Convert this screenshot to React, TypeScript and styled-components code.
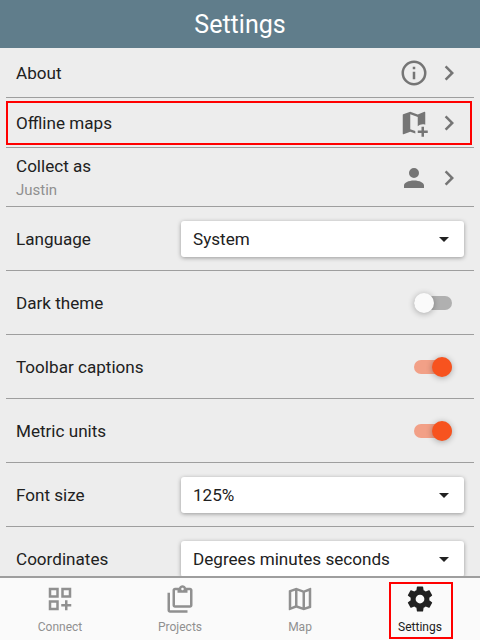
import React from "react";
import styled, { createGlobalStyle } from "styled-components";

const GlobalStyle = createGlobalStyle`
  * { box-sizing: border-box; }
  body { margin: 0; }
`;

const Screen = styled.div`
  width: 480px;
  height: 640px;
  display: flex;
  flex-direction: column;
  overflow: hidden;
  background: #ededed;
  color: #212121;
  font-family: Roboto, sans-serif;
  font-size: 17.1px;
`;

const Header = styled.header`
  flex: none;
  height: 48px;
  padding-top: 2px;
  display: flex;
  align-items: center;
  justify-content: center;
  background: #607d8b;
  color: #fff;
  font-size: 25px;
  line-height: 30px;
`;

const SettingsList = styled.main`
  flex: 1;
  min-height: 0;
  overflow: hidden;
  padding: 0 6px;
`;

const Row = styled.div<{ $height?: number }>`
  position: relative;
  height: ${(p) => p.$height ?? 64}px;
  padding: 0 10px;
  display: flex;
  align-items: center;
  justify-content: space-between;
  border-bottom: 1px solid #9e9e9e;
`;

const Labels = styled.div`
  display: flex;
  flex-direction: column;
`;

const Label = styled.span`
  line-height: 24px;
  white-space: nowrap;
`;

const Caption = styled.span`
  font-size: 15px;
  line-height: 24px;
  margin-bottom: -2px;
  color: #909090;
`;

const RowIcons = styled.div<{ $lowered?: boolean }>`
  display: flex;
  gap: 5px;
  padding-top: ${(p) => (p.$lowered ? 2 : 0)}px;
  color: #757575;
`;

const Highlight = styled.div<{ $inset: string }>`
  position: absolute;
  inset: ${(p) => p.$inset};
  border: 2px solid #ff0000;
`;

const Select = styled.div`
  width: 283px;
  height: 36px;
  flex: none;
  padding: 0 8px 0 12px;
  display: flex;
  align-items: center;
  justify-content: space-between;
  background: #fff;
  border-radius: 3px;
  box-shadow: 0 1px 4px rgba(0, 0, 0, 0.36);
`;

const Track = styled.div<{ $on: boolean }>`
  width: 38px;
  height: 14px;
  margin-right: 12px;
  border-radius: 7px;
  display: flex;
  align-items: center;
  justify-content: ${(p) => (p.$on ? "flex-end" : "flex-start")};
  background: ${(p) => (p.$on ? "#f2a087" : "#b0b0b0")};
`;

const Thumb = styled.div<{ $on: boolean }>`
  width: 20px;
  height: 20px;
  flex: none;
  border-radius: 50%;
  background: ${(p) => (p.$on ? "#f7531f" : "#fafafa")};
  box-shadow: 0 1px 6px rgba(0, 0, 0, 0.3);
`;

const TabBar = styled.nav`
  flex: none;
  height: 64px;
  display: grid;
  grid-template-columns: repeat(4, 1fr);
  background: #fafafa;
  border-top: 2px solid #9e9e9e;
`;

const Tab = styled.div<{ $active?: boolean }>`
  position: relative;
  display: flex;
  flex-direction: column;
  align-items: center;
  padding-top: 6px;
  color: ${(p) => (p.$active ? "#212121" : "#909090")};
  font-size: 12px;
  line-height: 16px;
`;

const TabCaption = styled.span`
  margin-top: 5px;
`;

const paths = {
  info: "M11,9H13V7H11M12,20C7.59,20 4,16.41 4,12C4,7.59 7.59,4 12,4C16.41,4 20,7.59 20,12C20,16.41 16.41,20 12,20M12,2A10,10 0 0,0 2,12A10,10 0 0,0 12,22A10,10 0 0,0 22,12A10,10 0 0,0 12,2M11,17H13V11H11V17Z",
  chevron: "M8.59,16.58L13.17,12L8.59,7.41L10,6L16,12L10,18L8.59,16.58Z",
  mapPlus:
    "M9,3L3.36,4.9C3.15,4.97 3,5.15 3,5.38V20.5A0.5,0.5 0 0,0 3.5,21L3.66,20.97L9,18.9L13.16,20.36C13.06,19.92 13,19.46 13,19C13,18.77 13,18.54 13.04,18.3L9,16.9V5L15,7.1V14.56C16.07,13.6 17.47,13 19,13C19.7,13 20.37,13.13 21,13.36V3.5A0.5,0.5 0 0,0 20.5,3L20.34,3.03L15,5.1L9,3M18,15V18H15V20H18V23H20V20H23V18H20V15H18Z",
  person: "M12,4A4,4 0 0,1 16,8A4,4 0 0,1 12,12A4,4 0 0,1 8,8A4,4 0 0,1 12,4M12,14C16.42,14 20,15.79 20,18V20H4V18C4,15.79 7.58,14 12,14Z",
  caret: "M7,10L12,15L17,10H7Z",
  connect: "M3,3H11V11H3V3M5,5V9H9V5H5M13,3H21V11H13V3M15,5V9H19V5H15M3,13H11V21H3V13M5,15V19H9V15H5M16,13H18V16H21V18H18V21H16V18H13V16H16V13Z",
  projects:
    "M4,7V21H18V23H4C2.9,23 2,22.1 2,21V7H4M20,3C21.1,3 22,3.9 22,5V17C22,18.1 21.1,19 20,19H8C6.9,19 6,18.1 6,17V5C6,3.9 6.9,3 8,3H11.18C11.6,1.84 12.7,1 14,1C15.3,1 16.4,1.84 16.82,3H20M14,3C13.45,3 13,3.45 13,4C13,4.55 13.45,5 14,5C14.55,5 15,4.55 15,4C15,3.45 14.55,3 14,3M10,7V5H8V17H20V5H18V7H10Z",
  map: "M20.5,3L20.34,3.03L15,5.1L9,3L3.36,4.9C3.15,4.97 3,5.15 3,5.38V20.5A0.5,0.5 0 0,0 3.5,21L3.66,20.97L9,18.9L15,21L20.64,19.1C20.85,19.03 21,18.85 21,18.62V3.5A0.5,0.5 0 0,0 20.5,3M10,5.47L14,6.87V18.53L10,17.13V5.47M5,6.46L8,5.45V17.15L5,18.31V6.46M19,17.54L16,18.55V6.86L19,5.7V17.54Z",
  cog: "M12,15.5A3.5,3.5 0 0,1 8.5,12A3.5,3.5 0 0,1 12,8.5A3.5,3.5 0 0,1 15.5,12A3.5,3.5 0 0,1 12,15.5M19.43,12.97C19.47,12.65 19.5,12.33 19.5,12C19.5,11.67 19.47,11.34 19.43,11L21.54,9.37C21.73,9.22 21.78,8.95 21.66,8.73L19.66,5.27C19.54,5.05 19.27,4.96 19.05,5.05L16.56,6.05C16.04,5.66 15.5,5.32 14.87,5.07L14.5,2.42C14.46,2.18 14.25,2 14,2H10C9.75,2 9.54,2.18 9.5,2.42L9.13,5.07C8.5,5.32 7.96,5.66 7.44,6.05L4.95,5.05C4.73,4.96 4.46,5.05 4.34,5.27L2.34,8.73C2.21,8.95 2.27,9.22 2.46,9.37L4.57,11C4.53,11.34 4.5,11.67 4.5,12C4.5,12.33 4.53,12.65 4.57,12.97L2.46,14.63C2.27,14.78 2.21,15.05 2.34,15.27L4.34,18.73C4.46,18.95 4.73,19.03 4.95,18.95L7.44,17.94C7.96,18.34 8.5,18.68 9.13,18.93L9.5,21.58C9.54,21.82 9.75,22 10,22H14C14.25,22 14.46,21.82 14.5,21.58L14.87,18.93C15.5,18.67 16.04,18.34 16.56,17.94L19.05,18.95C19.27,19.03 19.54,18.95 19.66,18.73L21.66,15.27C21.78,15.05 21.73,14.78 21.54,14.63L19.43,12.97Z",
};

type IconName = keyof typeof paths;

function Icon({ name, size = 30 }: { name: IconName; size?: number }) {
  return (
    <svg width={size} height={size} viewBox="0 0 24 24" fill="currentColor" display="block">
      <path fillRule="evenodd" d={paths[name]} />
    </svg>
  );
}

function LinkRow(props: { label: string; icon: IconName; height: number; caption?: string; marked?: boolean }) {
  return (
    <Row $height={props.height}>
      <Labels>
        <Label>{props.label}</Label>
        {props.caption && <Caption>{props.caption}</Caption>}
      </Labels>
      <RowIcons $lowered={Boolean(props.caption)}>
        <Icon name={props.icon} />
        <Icon name="chevron" />
      </RowIcons>
      {props.marked && <Highlight $inset="3px 2px 2px 0" />}
    </Row>
  );
}

function SelectRow({ label, value }: { label: string; value: string }) {
  return (
    <Row>
      <Label>{label}</Label>
      <Select>
        <Label>{value}</Label>
        <Icon name="caret" size={24} />
      </Select>
    </Row>
  );
}

function SwitchRow({ label, on }: { label: string; on: boolean }) {
  return (
    <Row>
      <Label>{label}</Label>
      <Track $on={on}>
        <Thumb $on={on} />
      </Track>
    </Row>
  );
}

const tabs: { icon: IconName; caption: string; active?: boolean }[] = [
  { icon: "connect", caption: "Connect" },
  { icon: "projects", caption: "Projects" },
  { icon: "map", caption: "Map" },
  { icon: "cog", caption: "Settings", active: true },
];

export default function App() {
  return (
    <Screen>
      <GlobalStyle />
      <Header>Settings</Header>
      <SettingsList>
        <LinkRow label="About" icon="info" height={50} />
        <LinkRow label="Offline maps" icon="mapPlus" height={50} marked />
        <LinkRow label="Collect as" caption="Justin" icon="person" height={59} />
        <SelectRow label="Language" value="System" />
        <SwitchRow label="Dark theme" on={false} />
        <SwitchRow label="Toolbar captions" on />
        <SwitchRow label="Metric units" on />
        <SelectRow label="Font size" value="125%" />
        <SelectRow label="Coordinates" value="Degrees minutes seconds" />
      </SettingsList>
      <TabBar>
        {tabs.map((tab) => (
          <Tab key={tab.caption} $active={tab.active}>
            <Icon name={tab.icon} />
            <TabCaption>{tab.caption}</TabCaption>
            {tab.active && <Highlight $inset="4px 27px 1px 29px" />}
          </Tab>
        ))}
      </TabBar>
    </Screen>
  );
}
